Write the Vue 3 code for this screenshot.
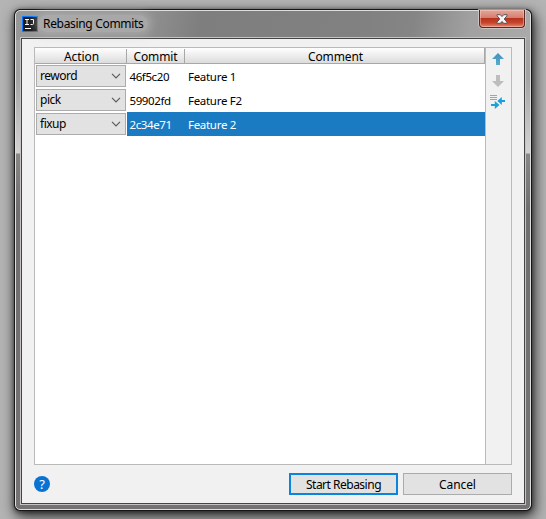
<script setup>
const commits = [
  { action: 'reword', hash: '46f5c20', comment: 'Feature 1' },
  { action: 'pick', hash: '59902fd', comment: 'Feature F2' },
  { action: 'fixup', hash: '2c34e71', comment: 'Feature 2', selected: true },
]
</script>

<template>
  <div class="desktop">
    <div class="window">
      <div class="frame">
        <header class="titlebar">
          <svg class="logo" width="16" height="16" viewBox="0 0 16 16">
            <rect width="16" height="16" fill="#087cfa" />
            <rect x="1" y="1" width="14" height="14" fill="#1c1c1e" />
            <path d="M3 3.5h4M5 3.5v5M3 8.5h4M8.5 3.5h3v4q0 1-1 1h-2" fill="none" stroke="#fff" stroke-width="1" />
            <path d="M3 12.5h6" stroke="#fff" stroke-width="1" />
          </svg>
          <h1 class="title">Rebasing Commits</h1>
          <button class="close" aria-label="Close">
            <svg width="12" height="10" viewBox="0 0 12 10">
              <path d="M1 .7h3.3L6 2.6 7.7.7H11v1.1L8.2 5 11 8.2v1.1H7.7L6 7.4 4.3 9.3H1V8.2L3.8 5 1 1.8z" fill="#f5f5f5" stroke="#56565f" stroke-width="1" />
            </svg>
          </button>
        </header>

        <main class="client">
          <section class="panel">
            <div class="table">
              <div class="row head">
                <div class="th">Action</div>
                <div class="th commit">Commit</div>
                <div class="th">Comment</div>
              </div>
              <div v-for="c in commits" :key="c.hash" class="row" :class="{ selected: c.selected }">
                <div class="combo">
                  <span>{{ c.action }}</span>
                  <svg width="10" height="6" viewBox="0 0 10 6">
                    <path d="M1 .8l4 4 4-4" fill="none" stroke="#5c5c5c" stroke-width="1.2" />
                  </svg>
                </div>
                <div class="cell">{{ c.hash }}</div>
                <div class="cell">{{ c.comment }}</div>
              </div>
            </div>
            <aside class="tools">
              <svg width="16" height="16" viewBox="0 0 16 16">
                <defs>
                  <linearGradient id="up" x1="0" y1="0" x2="0" y2="1">
                    <stop offset="0" stop-color="#4291b8" />
                    <stop offset="1" stop-color="#55add3" />
                  </linearGradient>
                </defs>
                <path d="M8 2l6 6h-4v6H6V8H2z" fill="url(#up)" />
              </svg>
              <svg width="16" height="16" viewBox="0 0 16 16">
                <path d="M6 2h4v6h4l-6 6-6-6h4z" fill="#bdbdbd" />
              </svg>
              <svg width="16" height="16" viewBox="0 0 16 16">
                <path d="M0 .5h7M0 2.5h7M0 4.5h7" stroke="#a0a5a9" stroke-width="1" />
                <path d="M7.3 6l4.5-4v3H15v2h-3.2v3zM1 9h3.8V6l4.7 4-4.7 4v-3H1z" fill="#1ba1d9" />
              </svg>
            </aside>
          </section>

          <footer class="footer">
            <div class="help">?</div>
            <button class="btn primary">Start Rebasing</button>
            <button class="btn cancel">Cancel</button>
          </footer>
        </main>
      </div>
    </div>
  </div>
</template>

<style>
body {
  margin: 0;
  overflow: hidden;
}
</style>

<style scoped>
* {
  box-sizing: border-box;
}
.desktop {
  width: 546px;
  height: 519px;
  padding: 9px 14px 8px;
  overflow: hidden;
  background: #b4b4b4;
  font: 12px/16px 'Noto Sans', 'Open Sans', sans-serif;
  color: #000;
}
.window {
  width: 518px;
  height: 502px;
  padding: 1px;
  border-radius: 6px;
  background: #161616;
  box-shadow: 0 1px 5px rgba(0, 0, 0, 0.55), 2px 5px 14px 1px rgba(0, 0, 0, 0.7);
}
.frame {
  width: 516px;
  height: 500px;
  padding: 0 5px 5px;
  border: 1px solid #dedede;
  border-radius: 5px;
  background:
    linear-gradient(100deg, #989898 0, #949494 14%, #909090 26%, #7e7e7e 36%, #818181 68%, #858585 77%, #a1a1a1 88%, #aaa 100%) 0 0 / 100% 29px no-repeat,
    linear-gradient(#a5a5a5 0, #a3a3a3 65px, #d5d2d2 142px, #8a8787 143px, #706e6e 200px, #747272 100%);
}
.titlebar {
  display: flex;
  height: 27px;
  align-items: flex-start;
  padding-left: 1px;
}
.logo {
  flex: none;
  margin-top: 5px;
}
.title {
  margin: 4px 0 0;
  padding: 0 5px;
  font-size: 12px;
  font-weight: 400;
  line-height: 17px;
  letter-spacing: -0.32px;
  border-radius: 9px;
  background: rgba(190, 190, 190, 0.5);
  box-shadow: 0 0 8px 3px rgba(190, 190, 190, 0.5);
}
.close {
  display: flex;
  width: 46px;
  height: 18px;
  margin: -1px 0 0 auto;
  padding: 0;
  align-items: center;
  justify-content: center;
  border: 1px solid #5c2722;
  border-top: 0;
  border-radius: 0 0 4px 4px;
  background: linear-gradient(#e3a79b 0, #d37c6d 48%, #b9321c 50%, #c6452b 75%, #df8a72 100%);
  box-shadow: inset 0 0 0 1px rgba(255, 210, 200, 0.45), 0 0 0 1px rgba(220, 210, 210, 0.7);
}
.client {
  width: 504px;
  height: 466px;
  padding: 8px 12px 7px;
  border: 1px solid #444;
  outline: 1px solid #c4c4c4;
  background: #f1f1f1;
}
.panel {
  display: flex;
  width: 478px;
  height: 418px;
  border: 1px solid #bababa;
}
.table {
  width: 450px;
  background: #fff;
}
.row {
  display: grid;
  grid-template-columns: 92px 58px 1fr;
  grid-template-rows: 100%;
  height: 24px;
}
.head {
  height: 16px;
  border-right: 1px solid #a8a8a8;
  border-bottom: 1px solid #a8a8a8;
  background: linear-gradient(#fff, #dcdcdc);
}
.th {
  height: 14px;
  margin-top: 1px;
  padding-left: 2px;
  border-right: 1px solid #a8a8a8;
  text-align: center;
  line-height: 15px;
  letter-spacing: -0.1px;
}
.th.commit {
  padding-left: 0;
}
.th:last-child {
  border: 0;
}
.combo {
  display: flex;
  width: 90px;
  height: 22px;
  margin: 1px;
  padding: 0 4px 0 3px;
  align-items: center;
  justify-content: space-between;
  border: 1px solid #ababab;
  background: #e2e2e2;
  line-height: 18px;
  letter-spacing: -0.5px;
}
.combo span {
  margin-top: -1px;
}
.cell {
  padding-left: 2.5px;
  font-size: 11.5px;
  line-height: 25px;
  letter-spacing: -0.4px;
}
.cell:last-child {
  padding-left: 3px;
  letter-spacing: -0.3px;
}
.selected .cell {
  background: #1a7bc3;
  color: #fff;
}
.tools {
  display: flex;
  width: 26px;
  flex-direction: column;
  align-items: center;
  gap: 6px;
  padding: 3px 1px 0 0;
  border-left: 1px solid #bababa;
}
.tools svg {
  flex: none;
}
.footer {
  display: flex;
  height: 22px;
  margin-top: 8px;
}
.help {
  width: 16px;
  height: 16px;
  margin: 3px auto 0 0;
  border-radius: 50%;
  background: #0873d3;
  color: #fff;
  text-align: center;
  font-size: 13px;
  line-height: 16px;
}
.btn {
  width: 109px;
  height: 22px;
  padding: 2px 0 0;
  border: 1px solid #ababab;
  background: #e2e2e2;
  color: #000;
  font: inherit;
  line-height: 18px;
  letter-spacing: -0.1px;
}
.primary {
  margin-right: 5px;
  border: 2px solid #0a84dc;
  line-height: 16px;
  letter-spacing: -0.5px;
}
</style>
